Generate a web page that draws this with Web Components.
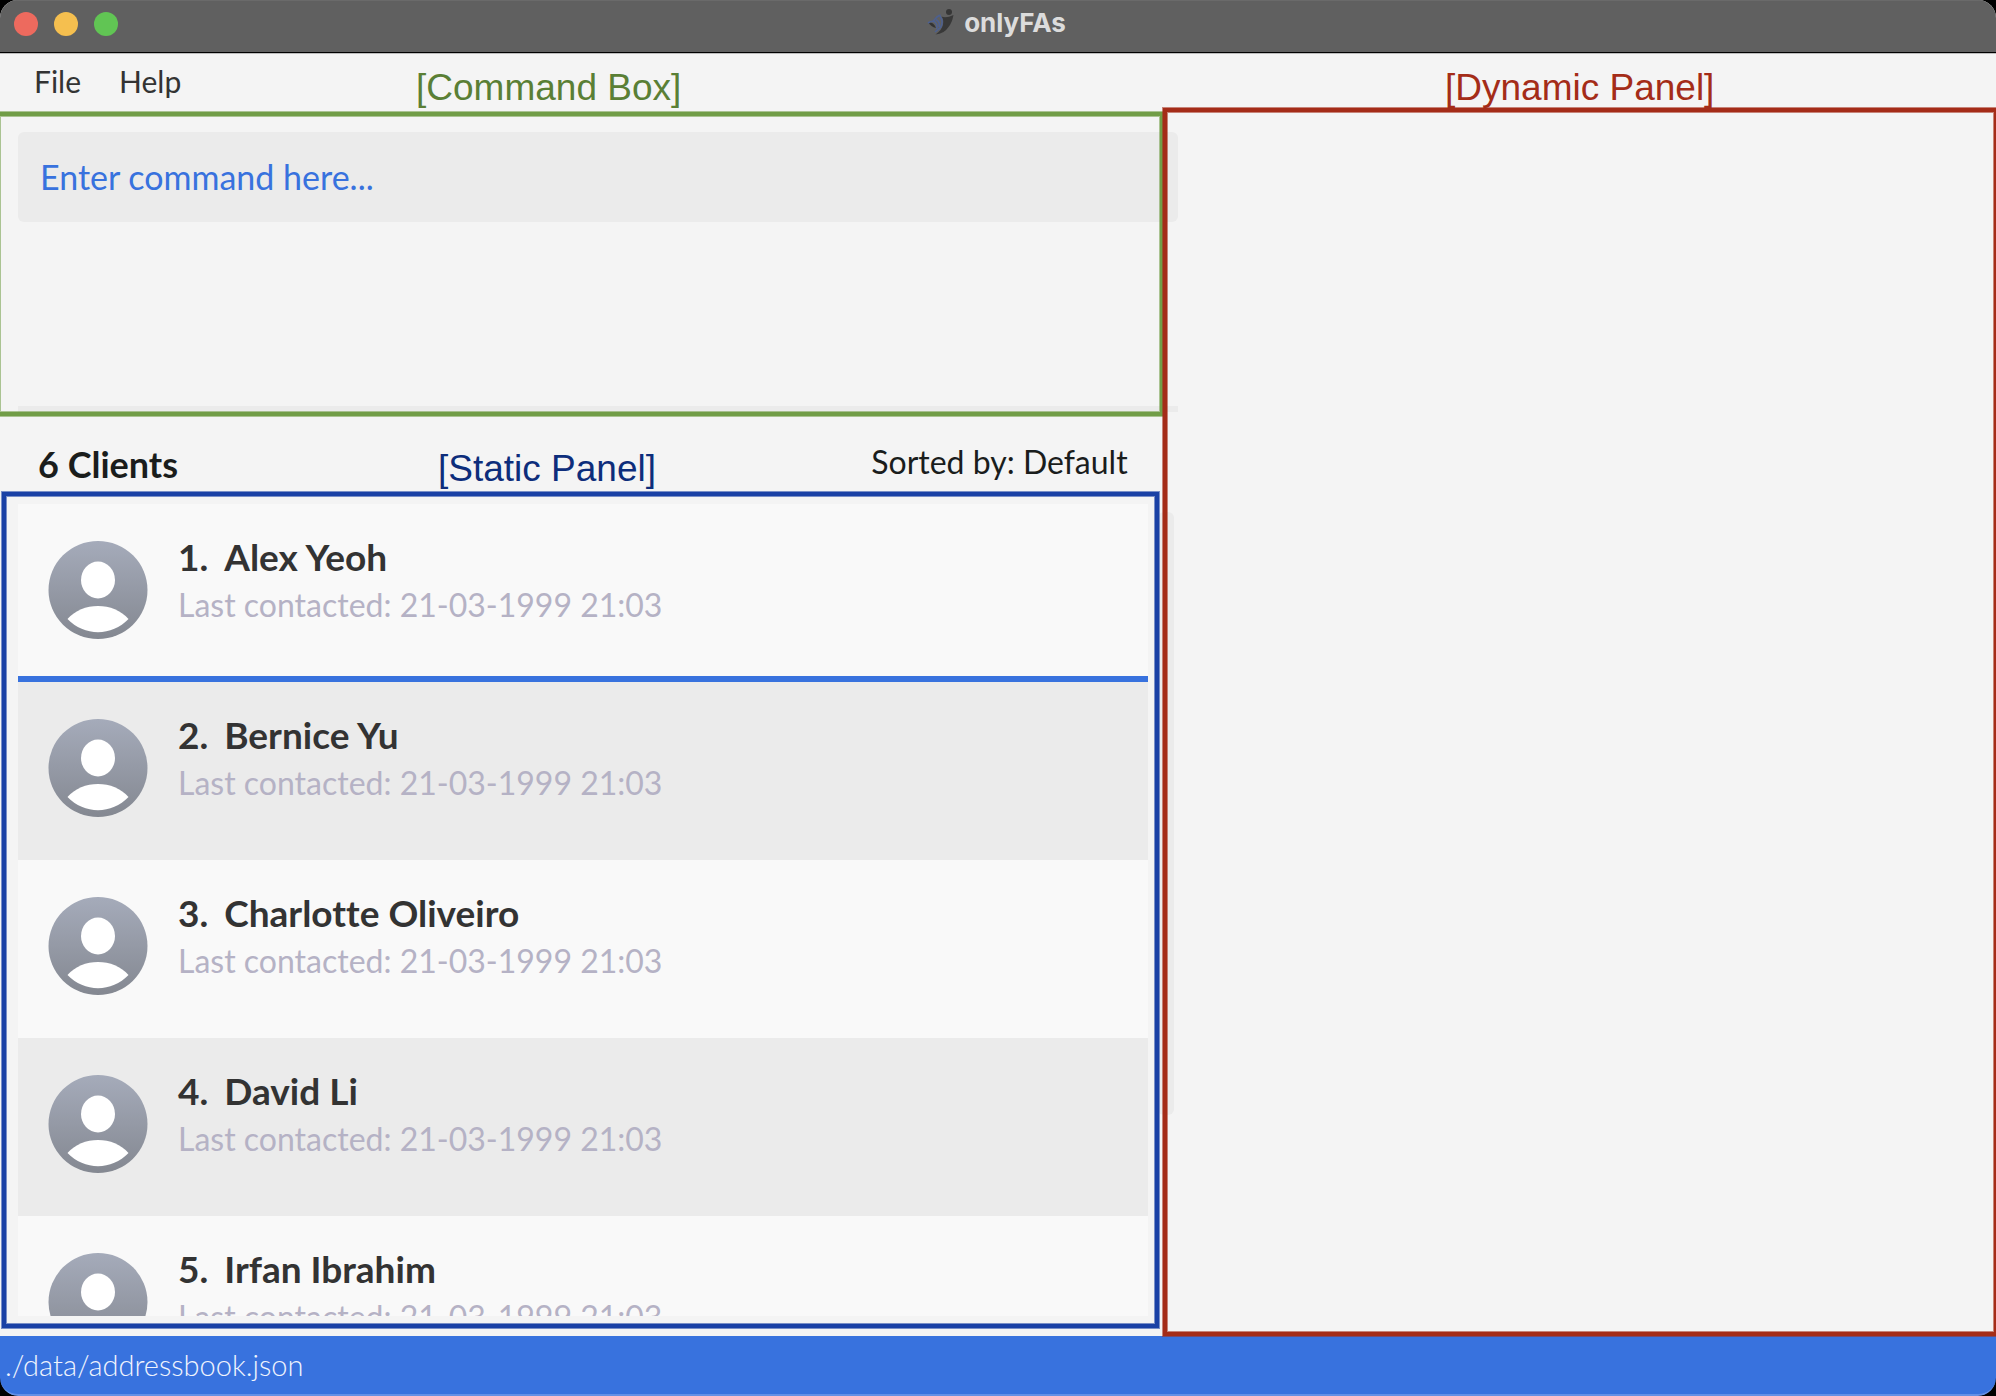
<!DOCTYPE html>
<html lang="en">
<head>
<meta charset="utf-8">
<title>onlyFAs</title>
<style>
  html, body { margin: 0; height: 100%; background: #000; }
  body { font-family: Lato, "Liberation Sans", sans-serif; color: #333; font-variant-ligatures: none; }
</style>
</head>
<body>
<app-window></app-window>

<script>
const define = (name, html, setup) => {
  const tpl = document.createElement('template');
  tpl.innerHTML = html;
  customElements.define(name, class extends HTMLElement {
    connectedCallback() {
      if (this.shadowRoot) return;
      this.attachShadow({ mode: 'open' }).append(tpl.content.cloneNode(true));
      if (setup) setup(this, this.shadowRoot);
    }
  });
};

define('title-bar', `
  <style>
    :host { display: grid; grid-template-columns: 1fr auto 1fr; align-items: start; height: 52px;
      background: #606060; border-bottom: 1px solid #000; box-shadow: inset 0 1px #6a6a6a; flex: none; }
    .lights { display: flex; gap: 16px; padding: 12px 14px; }
    button { width: 24px; height: 24px; border: 0; padding: 0; border-radius: 50%; }
    .close { background: #ed6a5e; } .min { background: #f5bf4f; } .max { background: #61c554; }
    h1 { margin: 0; display: flex; gap: 9px; font-family: Inter, sans-serif; font-weight: 700; font-size: 26px;
      line-height: 32px; color: #dcdcdc; padding: 7px 3px 0 0; }
    svg { width: 28px; height: 28px; }
  </style>
  <div class="lights">
    <button class="close" aria-label="Close"></button>
    <button class="min" aria-label="Minimize"></button>
    <button class="max" aria-label="Zoom"></button>
  </div>
  <h1>
    <svg viewBox="0 0 28 28" aria-hidden="true">
      <circle cx="22" cy="5" r="3" fill="#363636"/>
      <path d="M14.500 9.500 Q19 11.500 26.500 8 Q25 16 21.500 20 Q17 27 8.500 27.500 Q15 23 16 17.500 Q17 13 14.500 9.500Z" fill="#383838"/>
      <path d="M1 15 Q7 15 9 21 Q4 20 1 15Z" fill="#333"/>
      <path d="M13.500 8 Q10 9 6.500 14 M1 16 Q5 13 8 15 Q11 18 9.500 22 M13 9 Q17 15 13.500 20.500 L8 25 M9 12.500 Q13.500 15 12 20" fill="none" stroke="#4d608f" stroke-width="1.600"/>
    </svg>
    <slot></slot>
  </h1>
  <span></span>`);

define('menu-bar', `
  <style>
    :host { display: block; height: 58px; flex: none; border-top: 1px solid #bdbdbd; box-sizing: border-box; }
    nav { display: flex; gap: 38px; padding: 9px 34px; }
    button { font: 400 30px/36px Lato, sans-serif; color: #333; border: 0; padding: 0; background: none; }
  </style>
  <nav><button>File</button><button>Help</button></nav>`);

define('command-box', `
  <style>
    :host { display: block; padding: 21px 0 0 18px; height: 301px; box-sizing: border-box; flex: none; }
    input { display: block; box-sizing: border-box; width: 100%; height: 90px; border: 0; border-radius: 6px;
      background: #ebebeb; padding: 0 22px 2px; font: 400 34px/40px Lato, sans-serif; color: #3872de; outline: 0; }
    input::placeholder { color: #3872de; opacity: 1; }
    output { display: block; margin-top: 184px; height: 6px; background: #ebebeb; }
  </style>
  <input aria-label="Command" placeholder="Enter command here...">
  <output aria-label="Result"></output>`);

define('person-avatar', `
  <style>:host { display: block; width: 100px; height: 100px; flex: none; } svg { display: block; }</style>
  <svg width="100" height="100" viewBox="0 0 100 100" aria-hidden="true">
    <defs><linearGradient id="g" x2="0" y2="1"><stop stop-color="#a5abba"/><stop offset="1" stop-color="#848891"/></linearGradient></defs>
    <ellipse cx="50" cy="50" rx="49.500" ry="49" fill="url(#g)"/>
    <ellipse cx="50" cy="40" rx="17" ry="18.500" fill="#fff"/>
    <path d="M19.500 79 C34 61.500 66 61.500 80.500 79 C64 96.500 36 96.500 19.500 79Z" fill="#fff"/>
  </svg>`);

define('client-card', `
  <style>
    :host { display: flex; gap: 30px; height: 178px; box-sizing: border-box; padding: 31px 30px 0; background: #ebebeb; flex: none; }
    :host(:nth-child(odd)) { background: #f9f9f9; }
    :host([selected]) { border-bottom: 6px solid #3872de; }
    person-avatar { margin-top: 5px; }
    h3 { margin: 0; font-weight: 700; font-size: 37px; line-height: 44px; color: #333; display: flex; gap: 16px; }
    p { margin: 6px 0 0; font-size: 32px; line-height: 40px; color: #b5b2c5; }
  </style>
  <person-avatar></person-avatar>
  <div>
    <h3><span class="n"></span><slot></slot></h3>
    <p></p>
  </div>`, (host, root) => {
    root.querySelector('.n').textContent = host.getAttribute('index') + '.';
    root.querySelector('p').textContent = 'Last contacted: ' + host.getAttribute('contacted');
  });

define('client-list', `
  <style>
    :host { display: flex; flex-direction: column; flex: 1; min-height: 0; padding-left: 18px; }
    header { display: flex; justify-content: space-between; height: 92px; flex: none; box-sizing: border-box;
      padding: 30px 50px 0 20px; color: #1a1d1c; }
    h2 { margin: 0; font-weight: 700; font-size: 36px; line-height: 44px; }
    .sort { font-size: 32px; line-height: 40px; }
    .body { display: flex; flex: 1; min-height: 0; gap: 10px; margin-bottom: 20px; }
    .rows { flex: 1; display: flex; flex-direction: column; overflow: hidden; }
    .thumb { width: 16px; height: 603px; margin: 8px 4px 0 0; border-radius: 6px; background: #ebebeb; }
  </style>
  <header><h2>6 Clients</h2><span class="sort">Sorted by: Default</span></header>
  <div class="body"><div class="rows"><slot></slot></div><div class="thumb"></div></div>`);

define('callout-frame', `
  <style>
    :host { position: absolute; box-sizing: border-box; border: 4px solid var(--line); pointer-events: none;
      box-shadow: 0 0 0 1px var(--edge), inset 0 0 0 1px var(--edge); }
    span { position: absolute; bottom: 100%; left: var(--label-x); font: 400 37px/42px "Liberation Sans", sans-serif;
      color: var(--ink); white-space: nowrap; margin-bottom: var(--label-gap); }
  </style>
  <span><slot></slot></span>`);

define('status-bar', `
  <style>
    :host { display: block; height: 60px; box-sizing: border-box; background: #3872de; border-bottom: 2px solid #6490e6;
      border-radius: 0 0 18px 18px; padding: 11px 5px; flex: none; font-weight: 300; font-size: 29px; line-height: 36px; color: #f0f4fd; }
  </style><slot></slot>`);

define('app-window', `
  <style>
    :host { display: flex; flex-direction: column; height: 100vh; position: relative; overflow: hidden;
      background: linear-gradient(#f4f4f4, #f4f4f4) 0 0 / 100% calc(100% - 40px) no-repeat #000; border-radius: 18px; }
    main { display: grid; grid-template-columns: 59% 1fr; flex: 1; min-height: 0; }
    .left { display: flex; flex-direction: column; min-height: 0; }
    .cmd { --line: #719d47; --edge: #719d4790; --ink: #5a7f35; --label-x: 416px; --label-gap: 7px;
      left: -4px; right: 832px; top: 112px; height: 304px; }
    .stat { --line: #1a41a5; --edge: #1a41a590; --ink: #0d2d7b; --label-x: 432px; --label-gap: 6px;
      left: 2px; right: 837px; top: 492px; bottom: 68px; }
    .dyn { --line: #a42c18; --edge: #a42c1890; --ink: #a42c18; --label-x: 278px; --label-gap: 3px;
      left: 1163px; right: -2px; top: 108px; bottom: 60px; }
  </style>
  <title-bar>onlyFAs</title-bar>
  <menu-bar></menu-bar>
  <main>
    <section class="left">
      <command-box></command-box>
      <client-list>
        <client-card index="1" contacted="21-03-1999 21:03" selected>Alex Yeoh</client-card>
        <client-card index="2" contacted="21-03-1999 21:03">Bernice Yu</client-card>
        <client-card index="3" contacted="21-03-1999 21:03">Charlotte Oliveiro</client-card>
        <client-card index="4" contacted="21-03-1999 21:03">David Li</client-card>
        <client-card index="5" contacted="21-03-1999 21:03">Irfan Ibrahim</client-card>
      </client-list>
    </section>
    <section></section>
  </main>
  <status-bar>./data/addressbook.json</status-bar>
  <callout-frame class="cmd">[Command Box]</callout-frame>
  <callout-frame class="stat">[Static Panel]</callout-frame>
  <callout-frame class="dyn">[Dynamic Panel]</callout-frame>`);
</script>
</body>
</html>
